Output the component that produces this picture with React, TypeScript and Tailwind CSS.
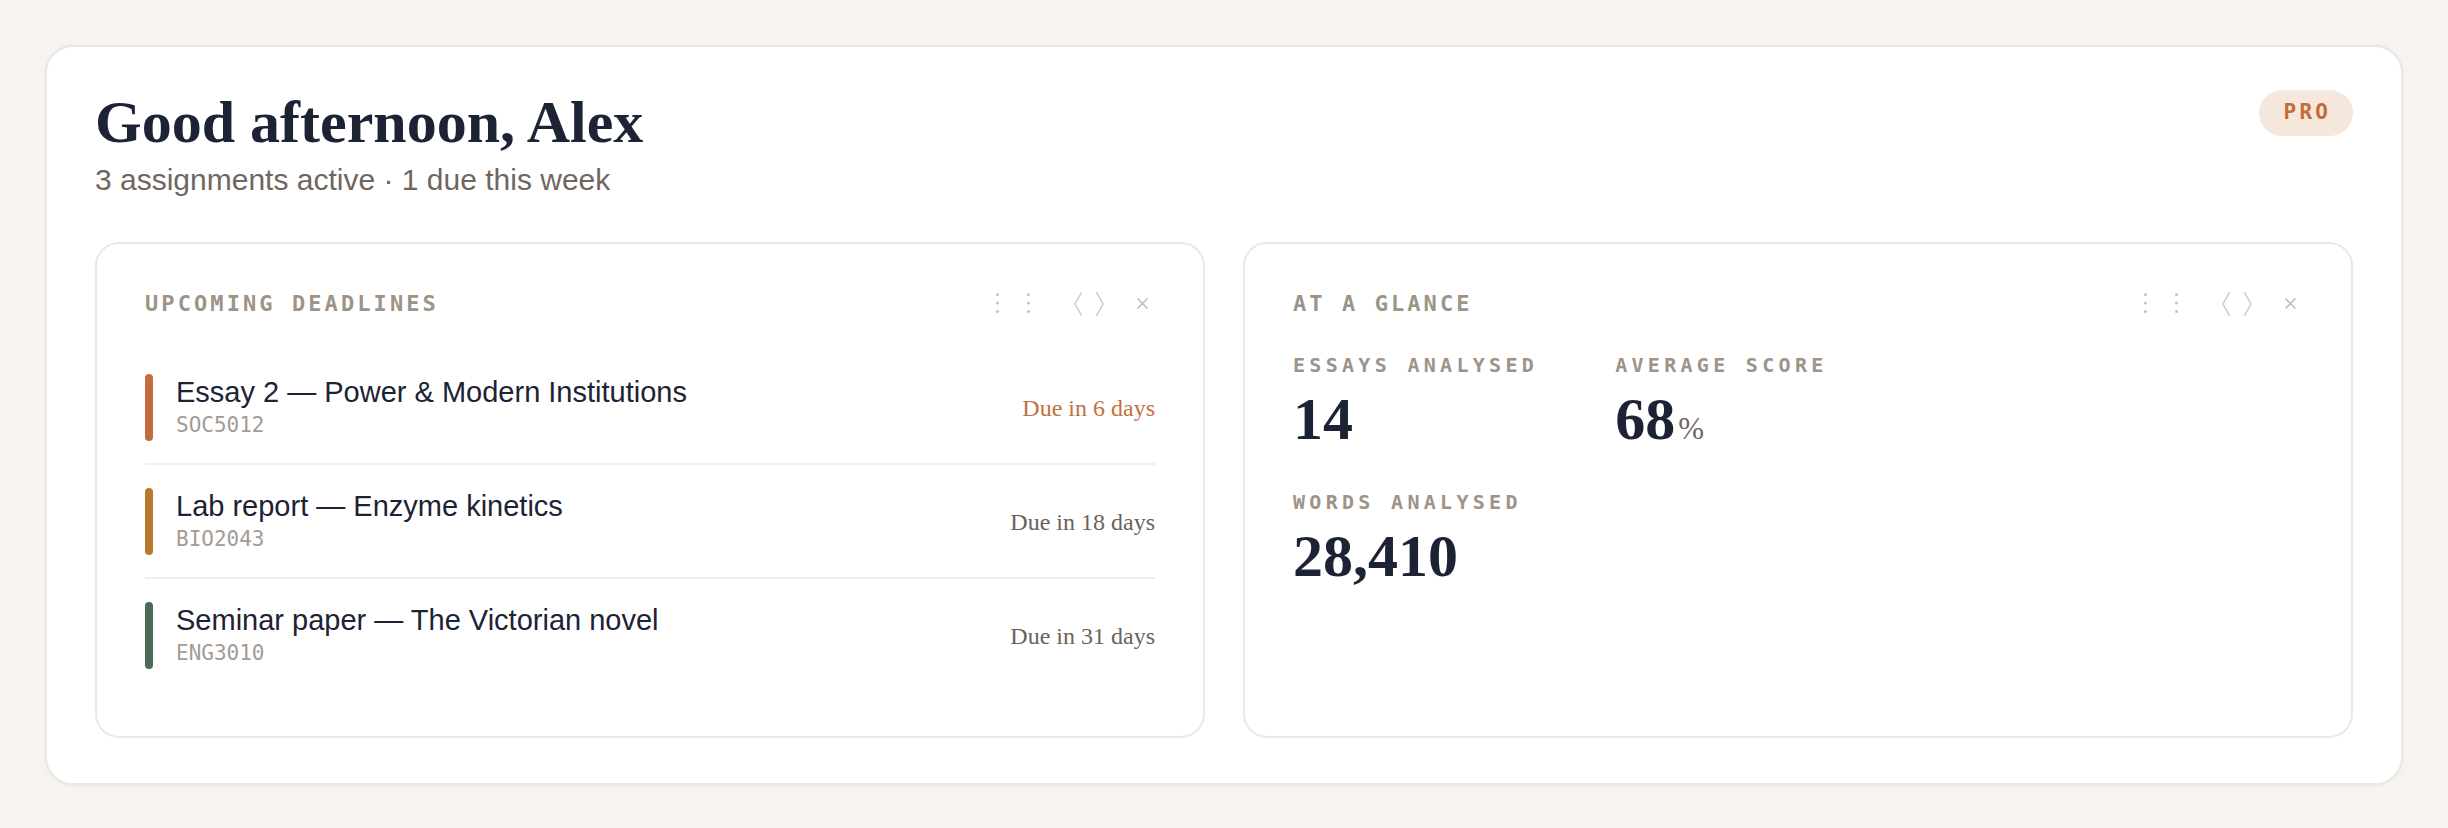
const serif = "font-['Liberation_Serif','Times_New_Roman',serif]";
const sans = "font-['Liberation_Sans',Arial,sans-serif]";
const mono = "font-['DejaVu_Sans_Mono',monospace]";

type Deadline = {
  title: string;
  code: string;
  due: string;
  bar: string;
  soon?: boolean;
};

const deadlines: Deadline[] = [
  {
    title: "Essay 2 — Power & Modern Institutions",
    code: "SOC5012",
    due: "Due in 6 days",
    bar: "bg-[#c46d3c]",
    soon: true,
  },
  {
    title: "Lab report — Enzyme kinetics",
    code: "BIO2043",
    due: "Due in 18 days",
    bar: "bg-[#b8792c]",
  },
  {
    title: "Seminar paper — The Victorian novel",
    code: "ENG3010",
    due: "Due in 31 days",
    bar: "bg-[#4b6a58]",
  },
];

const WidgetControls = () => (
  <div className="flex items-center">
    <button aria-label="Move" className="h-6 w-9">
      <svg width="36" height="24" viewBox="0 0 36 24" fill="#cac1b8">
        <circle cx="2.5" cy="2.5" r="1.5" />
        <circle cx="2.5" cy="11" r="1.5" />
        <circle cx="2.5" cy="19.5" r="1.5" />
        <circle cx="33.5" cy="2.5" r="1.5" />
        <circle cx="33.5" cy="11" r="1.5" />
        <circle cx="33.5" cy="19.5" r="1.5" />
      </svg>
    </button>
    <button aria-label="Resize" className="ml-[40px] h-6 w-9">
      <svg
        width="36"
        height="24"
        viewBox="0 0 36 24"
        fill="none"
        stroke="#d4c7b8"
        strokeWidth="1.5"
      >
        <path d="M10.5 0.5 L4 12 L10.5 23.5" />
        <path d="M25.5 0.5 L32 12 L25.5 23.5" />
      </svg>
    </button>
    <button aria-label="Remove" className="ml-[28px] h-6 w-5">
      <svg
        width="20"
        height="24"
        viewBox="0 0 20 24"
        fill="none"
        stroke="#c5bdb5"
        strokeWidth="1.6"
      >
        <path d="M2.5 6.5 L12.5 16.5 M12.5 6.5 L2.5 16.5" />
      </svg>
    </button>
  </div>
);

const WidgetHeader = ({ label }: { label: string }) => (
  <div className="mb-[33px] flex h-[28px] items-center justify-between">
    <span
      className={`${mono} text-[22px] leading-[28px] font-bold tracking-[0.14em] text-[#9d9389]`}
    >
      {label}
    </span>
    <WidgetControls />
  </div>
);

const Stat = ({
  label,
  value,
  suffix,
}: {
  label: string;
  value: string;
  suffix?: string;
}) => (
  <div>
    <div
      className={`${mono} mb-[10px] text-[20px] leading-[28px] font-bold tracking-[0.215em] text-[#9d9389]`}
    >
      {label}
    </div>
    <div
      className={`${serif} text-[60px] leading-[60px] font-bold text-[#1b2335]`}
    >
      {value}
      {suffix && (
        <span className="ml-[3px] text-[31px] font-normal text-[#6f675f]">
          {suffix}
        </span>
      )}
    </div>
  </div>
);

export default function App() {
  return (
    <div className="min-h-screen bg-[#f7f4ef] p-[45px]">
      <div className="rounded-[28px] border-2 border-[#e9e7e5] bg-white px-[48px] pt-[48px] pb-[45px] shadow-[0_1px_3px_rgba(0,0,0,0.05)]">
        <div className="flex items-start justify-between">
          <div>
            <h1
              className={`${serif} text-[60px] leading-[54px] font-bold text-[#1b2335]`}
            >
              Good afternoon, Alex
            </h1>
            <p
              className={`${sans} mt-[14px] text-[30px] leading-[34px] text-[#6f675f]`}
            >
              3 assignments active · 1 due this week
            </p>
          </div>
          <span
            className={`${mono} -mt-[5px] flex h-[46px] items-center rounded-full bg-[#f6e7dc] pr-[22px] pl-[25px] text-[21px] font-bold tracking-[0.15em] text-[#c46c37]`}
          >
            PRO
          </span>
        </div>

        <div className="mt-[45px] grid grid-cols-2 gap-[38px]">
          <section className="rounded-[24px] border-2 border-[#ebe9e7] bg-white px-[48px] pt-[46px] pb-[45px]">
            <WidgetHeader label="UPCOMING DEADLINES" />
            <ul>
              {deadlines.map((d, i) => (
                <li
                  key={d.code}
                  className={`flex items-stretch gap-[23px] pt-[23px] pb-[22px] ${
                    i < deadlines.length - 1
                      ? "border-b-2 border-[#f0eeec]"
                      : ""
                  }`}
                >
                  <span className={`w-[8px] rounded-full ${d.bar}`} />
                  <div className="flex-1">
                    <div
                      className={`${sans} text-[29px] leading-[36px] text-[#1b2335]`}
                    >
                      {d.title}
                    </div>
                    <div
                      className={`${mono} text-[21px] leading-[31px] text-[#a39b94]`}
                    >
                      {d.code}
                    </div>
                  </div>
                  <span
                    className={`${serif} self-center text-[24px] ${
                      d.soon ? "text-[#c2703f]" : "text-[#6b625a]"
                    }`}
                  >
                    {d.due}
                  </span>
                </li>
              ))}
            </ul>
          </section>

          <section className="rounded-[24px] border-2 border-[#ebe9e7] bg-white px-[48px] pt-[46px] pb-[45px]">
            <WidgetHeader label="AT A GLANCE" />
            <div className="grid w-fit grid-cols-[auto_auto] gap-x-[77px] gap-y-[29px]">
              <Stat label="ESSAYS ANALYSED" value="14" />
              <Stat label="AVERAGE SCORE" value="68" suffix="%" />
              <Stat label="WORDS ANALYSED" value="28,410" />
            </div>
          </section>
        </div>
      </div>
    </div>
  );
}
